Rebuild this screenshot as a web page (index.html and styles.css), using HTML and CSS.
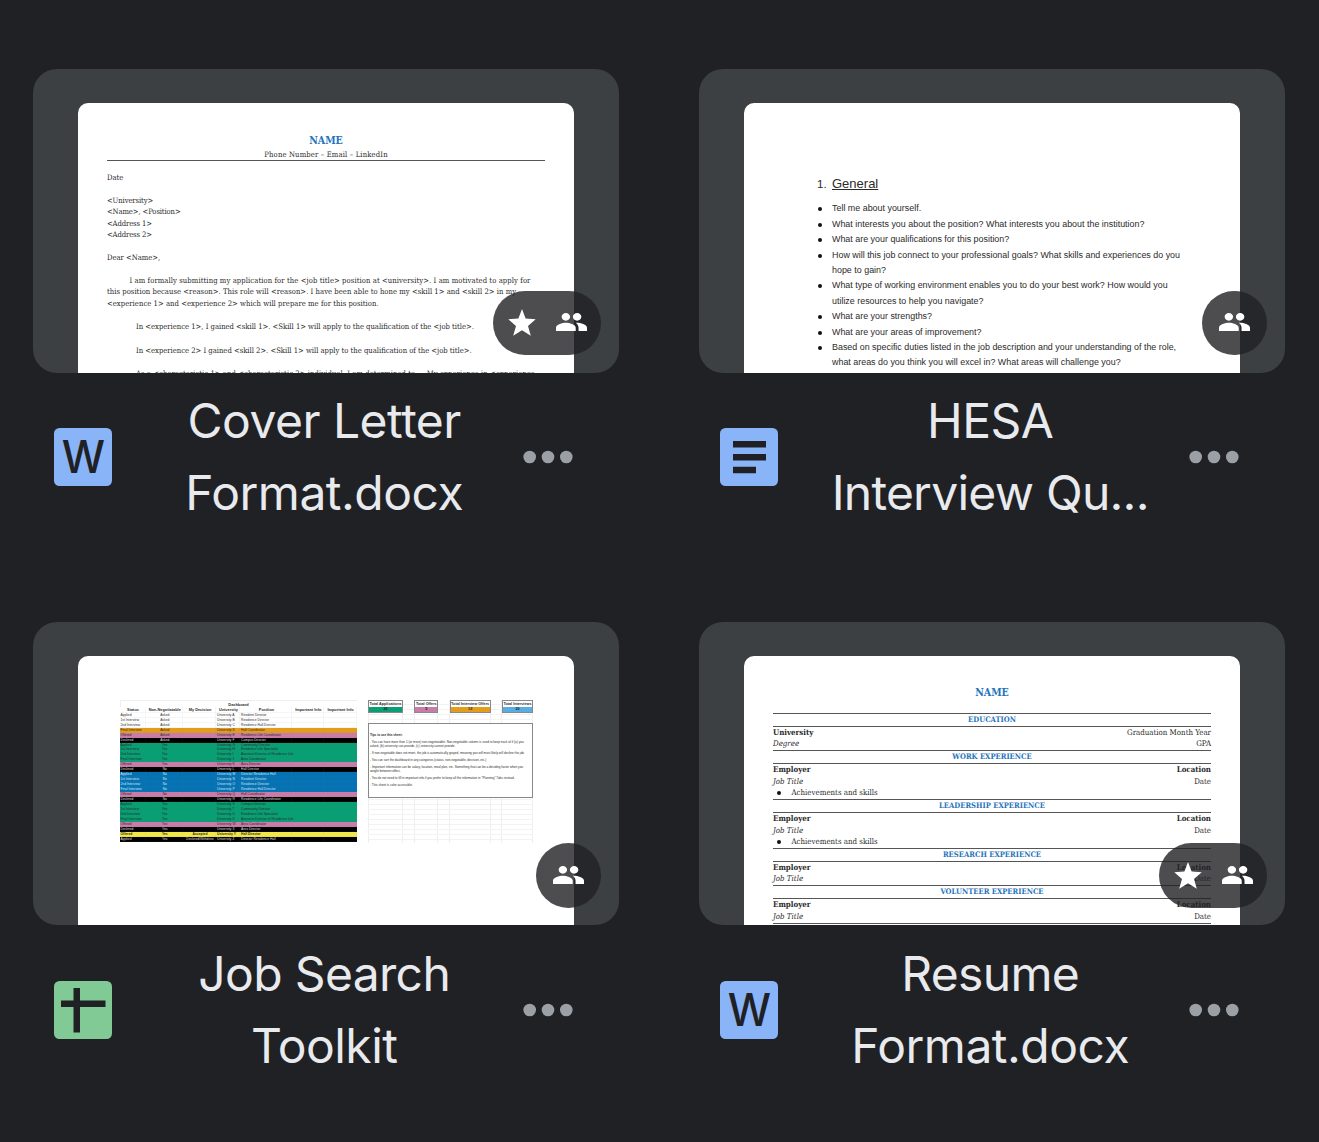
FILE: index.html
```html
<!DOCTYPE html>
<html lang="en">
<head>
<meta charset="utf-8">
<title>Files</title>
<link rel="stylesheet" href="styles.css">
</head>
<body>
<svg width="0" height="0" class="defs" aria-hidden="true">
  <symbol id="people" viewBox="1 5 22 14" preserveAspectRatio="none"><path d="M16 11c1.66 0 2.99-1.34 2.99-3S17.66 5 16 5c-1.66 0-3 1.34-3 3s1.34 3 3 3zm-8 0c1.66 0 2.99-1.34 2.99-3S9.66 5 8 5C6.34 5 5 6.34 5 8s1.34 3 3 3zm0 1.6c-2.33 0-7 1.17-7 3.9V19h14v-2.5c0-2.73-4.67-3.9-7-3.9zm8 0c-.29 0-.62.02-.97.05 1.16.84 1.97 2.3 1.97 3.85V19h6v-2.5c0-2.73-4.67-3.9-7-3.9z"/></symbol>
  <symbol id="star" viewBox="0 0 28 27"><path d="M14 0L17.600 9.400L27.700 10.300L20 17L22.800 26.700L14 21.200L5.200 26.700L8 17L.3 10.300L10.400 9.400z"/></symbol>
  <symbol id="more" viewBox="0 0 50 14"><circle cx="6.7" cy="7" r="6.3"/><circle cx="25" cy="7" r="6.3"/><circle cx="43.3" cy="7" r="6.3"/></symbol>
</svg>
<main class="files">

  <article class="file">
    <div class="preview">
      <div class="page letter">
        <h2 class="doc-name">NAME</h2>
        <p class="contact">Phone Number – Email – LinkedIn</p>
        <p class="date">Date</p>
        <div class="address"><p>&lt;University&gt;</p><p>&lt;Name&gt;, &lt;Position&gt;</p><p>&lt;Address 1&gt;</p><p>&lt;Address 2&gt;</p></div>
        <p class="dear">Dear &lt;Name&gt;,</p>
        <div class="intro"><p class="indent">I am formally submitting my application for the &lt;job title&gt; position at &lt;university&gt;. I am motivated to apply for</p><p>this position because &lt;reason&gt;. This role will &lt;reason&gt;. I have been able to hone my &lt;skill 1&gt; and &lt;skill 2&gt; in my</p><p>&lt;experience 1&gt; and &lt;experience 2&gt; which will prepare me for this position.</p></div>
        <p class="para">In &lt;experience 1&gt;, I gained &lt;skill 1&gt;. &lt;Skill 1&gt; will apply to the qualification of the &lt;job title&gt;.</p>
        <p class="para">In &lt;experience 2&gt; I gained &lt;skill 2&gt;. &lt;Skill 1&gt; will apply to the qualification of the &lt;job title&gt;.</p>
        <p class="para last">As a &lt;characteristic 1&gt; and &lt;characteristic 2&gt; individual, I am determined to … My experience in &lt;experience</p>
      </div>
      <div class="badge wide"><svg class="i-star"><use href="#star"/></svg><svg class="i-people"><use href="#people"/></svg></div>
    </div>
    <footer class="info">
      <span class="type word"><span>W</span></span>
      <h1 class="title"><span class="t-cover">Cover Letter</span><span class="t-format">Format.docx</span></h1>
      <svg class="more"><use href="#more"/></svg>
    </footer>
  </article>

  <article class="file">
    <div class="preview">
      <div class="page questions">
        <h2><span class="num">1.</span><u>General</u></h2>
        <ul>
          <li>Tell me about yourself.</li>
          <li>What interests you about the position? What interests you about the institution?</li>
          <li>What are your qualifications for this position?</li>
          <li>How will this job connect to your professional goals? What skills and experiences do you<br>hope to gain?</li>
          <li>What type of working environment enables you to do your best work? How would you<br>utilize resources to help you navigate?</li>
          <li>What are your strengths?</li>
          <li>What are your areas of improvement?</li>
          <li>Based on specific duties listed in the job description and your understanding of the role,<br>what areas do you think you will excel in? What areas will challenge you?</li>
        </ul>
      </div>
      <div class="badge"><svg class="i-people"><use href="#people"/></svg></div>
    </div>
    <footer class="info">
      <svg class="type" viewBox="0 0 58 58"><rect width="58" height="58" rx="5.5" fill="#8ab4f8"/><path d="M13 13H46V19.500H13zM13 26H46V32.500H13zM13 38.700H36V45.200H13z" fill="#202124"/></svg>
      <h1 class="title"><span class="t-hesa">HESA</span><span class="t-interview">Interview Qu...</span></h1>
      <svg class="more"><use href="#more"/></svg>
    </footer>
  </article>

  <article class="file">
    <div class="preview">
      <div class="page sheet">
        <div class="dash">
          <div class="dash-title">Dashboard</div>
          <div class="row head"><b>Status</b><b>Non-Negotiatable</b><b>My Decision</b><b>University</b><b>Position</b><b>Important Info</b><b>Important Info</b></div>
          <div class="row"><i>Applied</i><i>Asked</i><i></i><i>University A</i><i>Resident Director</i><i></i><i></i></div>
          <div class="row"><i>1st Interview</i><i>Asked</i><i></i><i>University B</i><i>Residence Director</i><i></i><i></i></div>
          <div class="row"><i>2nd Interview</i><i>Asked</i><i></i><i>University C</i><i>Residence Hall Director</i><i></i><i></i></div>
          <div class="row orange"><i>Final Interview</i><i>Asked</i><i></i><i>University D</i><i>Hall Coordinator</i><i></i><i></i></div>
          <div class="row pink"><i>Offered</i><i>Asked</i><i></i><i>University E</i><i>Residence Life Coordinator</i><i></i><i></i></div>
          <div class="row black"><i>Declined</i><i>Asked</i><i></i><i>University F</i><i>Campus Director</i><i></i><i></i></div>
          <div class="row green"><i>Applied</i><i>Yes</i><i></i><i>University G</i><i>Community Director</i><i></i><i></i></div>
          <div class="row green"><i>1st Interview</i><i>Yes</i><i></i><i>University H</i><i>Residence Life Specialist</i><i></i><i></i></div>
          <div class="row green"><i>2nd Interview</i><i>Yes</i><i></i><i>University I</i><i>Assistant Director of Residence Life</i><i></i><i></i></div>
          <div class="row green"><i>Final Interview</i><i>Yes</i><i></i><i>University J</i><i>Area Coordinator</i><i></i><i></i></div>
          <div class="row pink"><i>Offered</i><i>Yes</i><i></i><i>University K</i><i>Area Director</i><i></i><i></i></div>
          <div class="row black"><i>Declined</i><i>No</i><i></i><i>University L</i><i>Hall Director</i><i></i><i></i></div>
          <div class="row blue"><i>Applied</i><i>No</i><i></i><i>University M</i><i>Director Residence Hall</i><i></i><i></i></div>
          <div class="row blue"><i>1st Interview</i><i>No</i><i></i><i>University N</i><i>Resident Director</i><i></i><i></i></div>
          <div class="row blue"><i>2nd Interview</i><i>No</i><i></i><i>University O</i><i>Residence Director</i><i></i><i></i></div>
          <div class="row blue"><i>Final Interview</i><i>No</i><i></i><i>University P</i><i>Residence Hall Director</i><i></i><i></i></div>
          <div class="row pink"><i>Offered</i><i>No</i><i></i><i>University Q</i><i>Hall Coordinator</i><i></i><i></i></div>
          <div class="row black"><i>Declined</i><i>No</i><i></i><i>University R</i><i>Residence Life Coordinator</i><i></i><i></i></div>
          <div class="row green"><i>Applied</i><i>Yes</i><i></i><i>University S</i><i>Campus Director</i><i></i><i></i></div>
          <div class="row green"><i>1st Interview</i><i>Yes</i><i></i><i>University T</i><i>Community Director</i><i></i><i></i></div>
          <div class="row green"><i>2nd Interview</i><i>Yes</i><i></i><i>University U</i><i>Residence Life Specialist</i><i></i><i></i></div>
          <div class="row green"><i>Final Interview</i><i>Yes</i><i></i><i>University V</i><i>Assistant Director of Residence Life</i><i></i><i></i></div>
          <div class="row pink"><i>Offered</i><i>Yes</i><i></i><i>University W</i><i>Area Coordinator</i><i></i><i></i></div>
          <div class="row black"><i>Declined</i><i>Yes</i><i></i><i>University X</i><i>Area Director</i><i></i><i></i></div>
          <div class="row yellow"><i>Offered</i><i>Yes</i><i>Accepted</i><i>University Y</i><i>Hall Director</i><i></i><i></i></div>
          <div class="row black"><i>Applied</i><i>Yes</i><i>Declined/Withdrew</i><i>University Z</i><i>Director Residence Hall</i><i></i><i></i></div>
        </div>
        <div class="side">
          <div class="totals">
            <div class="total green"><b>Total Applications</b><b class="val">26</b></div>
            <div class="total pink"><b>Total Offers</b><b class="val">5</b></div>
            <div class="total orange"><b>Total Interview Offers</b><b class="val">12</b></div>
            <div class="total sky"><b>Total Interviews</b><b class="val">20</b></div>
          </div>
          <div class="tips">
            <p><b>Tips to use this sheet:</b></p>
            <p>- You can have more than 1 (or more) non-negotiatable. Non-negotiable column is used to keep track of if (a) you<br>asked, (b) university can provide, (c) university cannot provide.</p>
            <p>- If non-negotiable does not meet, the job is automatically grayed, meaning you will most likely will decline the job.</p>
            <p>- You can sort the dashboard in any categories (status, non-negotiable, decision, etc.)</p>
            <p>- Important information can be salary, location, meal plan, etc. Something that can be a deciding factor when you<br>weight between offers.</p>
            <p>- You do not need to fill in important info if you prefer to keep all the information in "Planning" Tabs instead.</p>
            <p>- This sheet is color accessible.</p>
          </div>
        </div>
      </div>
      <div class="badge"><svg class="i-people"><use href="#people"/></svg></div>
    </div>
    <footer class="info">
      <svg class="type" viewBox="0 0 58 58"><rect width="58" height="58" rx="5.500" fill="#81c995"/><path d="M19.500 7H26V19.500H51.500V26H26V51.500H19.500V26H7V19.500H19.500z" fill="#202124"/></svg>
      <h1 class="title"><span class="t-job">Job Search</span><span class="t-toolkit">Toolkit</span></h1>
      <svg class="more"><use href="#more"/></svg>
    </footer>
  </article>

  <article class="file">
    <div class="preview">
      <div class="page resume">
        <h2 class="doc-name">NAME</h2>
        <h3>EDUCATION</h3>
        <section><p><b>University</b><span>Graduation Month Year</span></p><p><em>Degree</em><span>GPA</span></p></section>
        <h3>WORK EXPERIENCE</h3>
        <section class="long"><p><b>Employer</b><b>Location</b></p><p><em>Job Title</em><span>Date</span></p><p class="bullet">Achievements and skills</p></section>
        <h3>LEADERSHIP EXPERIENCE</h3>
        <section class="long"><p><b>Employer</b><b>Location</b></p><p><em>Job Title</em><span>Date</span></p><p class="bullet">Achievements and skills</p></section>
        <h3>RESEARCH EXPERIENCE</h3>
        <section><p><b>Employer</b><b>Location</b></p><p><em>Job Title</em><span>Date</span></p></section>
        <h3>VOLUNTEER EXPERIENCE</h3>
        <section class="end"><p><b>Employer</b><b>Location</b></p><p><em>Job Title</em><span>Date</span></p></section>
      </div>
      <div class="badge wide"><svg class="i-star"><use href="#star"/></svg><svg class="i-people"><use href="#people"/></svg></div>
    </div>
    <footer class="info">
      <span class="type word"><span>W</span></span>
      <h1 class="title"><span class="t-resume">Resume</span><span class="t-format">Format.docx</span></h1>
      <svg class="more"><use href="#more"/></svg>
    </footer>
  </article>
</main>
</body>
</html>
```
FILE: styles.css
```css
* { box-sizing: border-box; margin: 0; padding: 0; }
body { background: #202124; height: 1142px; overflow: hidden; font-family: Inter, sans-serif; }
.defs { display: block; height: 0; }
.files { display: grid; grid-template-columns: 586px 586px; column-gap: 80px; grid-auto-rows: 553px; padding: 69px 0 0 33px; }
.preview { position: relative; height: 304px; padding: 34px 45px 0; background: #3c4043; border-radius: 24px; overflow: hidden; }
.file:nth-child(n+3) .preview { height: 303px; margin-bottom: 13px; }
.file:nth-child(n+3) .badge { bottom: 17px; height: 65px; }
.page { height: 270px; background: #fff; border-radius: 10px 10px 0 0; overflow: hidden; color: #2b2b2b; white-space: nowrap; }

.badge { position: absolute; right: 18px; bottom: 18px; width: 65px; height: 64px; border-radius: 33px; background: rgba(32, 33, 36, .8); display: flex; align-items: center; justify-content: center; gap: 20px; fill: #fff; }
.badge.wide { width: 108px; }
.i-people { width: 31px; height: 18px; margin-top: -2px; }
.i-star { width: 28px; height: 27px; margin-top: -1px; }

.info { display: grid; grid-template-columns: 58px 1fr 50px; align-items: center; height: 144px; margin-top: 12px; padding: 0 46px 0 21.400px; }
.type { width: 58px; height: 58px; }
.word { display: flex; align-items: center; justify-content: center; border-radius: 5.500px; background: #8ab4f8; color: #202124; font-size: 44.500px; font-weight: 500; line-height: 58px; }
.word span { transform: scaleX(.97); }
.more { width: 50px; height: 14px; fill: #9aa0a6; }
.title { display: flex; flex-direction: column; align-items: center; font-size: 48px; line-height: 72px; font-weight: 400; color: #e8eaed; white-space: nowrap; padding-left: 13px; letter-spacing: -.5px; }
.t-interview { letter-spacing: -.75px; }
.t-job, .t-resume { letter-spacing: -.65px; }

/* word documents */
.letter, .resume { font-family: "DejaVu Serif Condensed", "DejaVu Serif", serif; font-stretch: condensed; font-size: 7.6px; line-height: 11.5px; padding: 30px 29px 0; }
.doc-name { font-size: 10.5px; line-height: 15px; text-align: center; color: #1f74bb; font-weight: 700; }
.contact { text-align: center; height: 13.400px; line-height: 13px; border-bottom: 1px solid #555; letter-spacing: .16px; }
.date { margin-top: 10.600px; }
.address, .dear { margin-top: 11.500px; }
.address { letter-spacing: -.1px; }
.intro { margin-top: 11px; letter-spacing: .05px; }
.indent { padding-left: 22.500px; letter-spacing: .095px; }
.para { padding-left: 29px; margin-top: 13px; }
.intro + .para { margin-top: 11.500px; }
.para.last { margin-top: 11px; letter-spacing: .08px; }

.resume h3 { height: 14.200px; border: solid #555; border-width: 1px 0; text-align: center; font-size: 7.600px; line-height: 12.500px; color: #1f74bb; }
.resume .doc-name { margin-bottom: 12.600px; }
.resume { padding-top: 29px; font-size: 7.850px; }
.resume section { height: 23.200px; }
.resume section.long { height: 34.700px; }
.resume section.end { height: 24.800px; border-bottom: 1px solid #555; }
.resume p { display: flex; justify-content: space-between; }
.resume .bullet { justify-content: flex-start; padding-left: 4px; }
.bullet::before { content: ""; width: 4px; height: 4px; border-radius: 50%; background: #111; margin: 4px 10.500px 0 0; }

/* interview questions */
.questions { font-family: "Liberation Sans", Arial, sans-serif; font-size: 8.910px; line-height: 15.400px; padding: 73px 0 0 73px; }
.questions h2 { display: flex; font-size: 13px; font-weight: 400; line-height: 16px; margin-bottom: 9.300px; }
.questions .num { width: 15px; font-size: 11.500px; }
.questions ul { list-style: none; }
.questions li { position: relative; padding-left: 15px; }
.questions li::before { content: ""; position: absolute; left: 1px; top: 6px; width: 4px; height: 4px; border-radius: 50%; background: #111; }

/* spreadsheet */
.sheet { display: flex; gap: 11.500px; padding: 44px 41px 0 41.500px; font-family: "Liberation Sans", Arial, sans-serif; font-size: 3.300px; line-height: 5px; }
.dash { width: 237px; height: 142.500px; }
.dash-title { height: 6.500px; line-height: 8px; text-align: center; font-weight: 700; border: solid #eee; border-width: 1px 0 0 1px; font-size: 3.900px; }
.row { display: grid; grid-template-columns: 26px 37.500px 33px 24px 52px 31.500px 33px; height: 4.970px; }
.row.head { height: 6.200px; line-height: 6px; text-align: center; font-size: 3.900px; }
.row > * { font-style: normal; padding-left: 1px; box-shadow: inset -.5px -.5px rgba(128, 128, 128, .14); height: 100%; min-width: 0; }
.row > :nth-child(2), .row > :nth-child(3) { text-align: center; }
.orange { background: #e39d1c; }
.pink { background: #c97ba9; }
.green { background: #079f73; }
.blue { background: #0572b4; color: #cfe4f5; }
.black { background: #000; color: #ddd; }
.yellow { background: #f2e74a; font-weight: 700; }
.sky { background: #56aee6; }
.side { width: 165px; height: 142.500px; background: repeating-linear-gradient(#0000 0 4px, #f3f3f3 4px 5px), linear-gradient(90deg, #eee 1px, #0000 1px 34px, #eee 34px 35px, #0000 35px 46px, #eee 46px 47px, #0000 47px 69px, #eee 69px 70px, #0000 70px 81px, #eee 81px 82px, #0000 82px 122px, #eee 122px 123px, #0000 123px 133px, #eee 133px 134px, #0000 134px 164px, #eee 164px); }
.totals { display: grid; grid-template-columns: 35px 24px 41px 31px; justify-content: space-between; height: 13px; }
.total { border: 1px solid #888; text-align: center; font-size: 3.750px; display: grid; grid-template-rows: 5.500px 1fr; }
.total b { background: #fff; line-height: 6px; min-width: 0; }
.total .val { background: none; color: #222; line-height: 5.500px; }
.tips { margin-top: 9.500px; height: 75.500px; border: 1px solid #888; background: #fff; padding: 10.500px 0 0 1px; font-size: 3.080px; line-height: 3.600px; }
.tips p { margin-bottom: 3.500px; }
```
